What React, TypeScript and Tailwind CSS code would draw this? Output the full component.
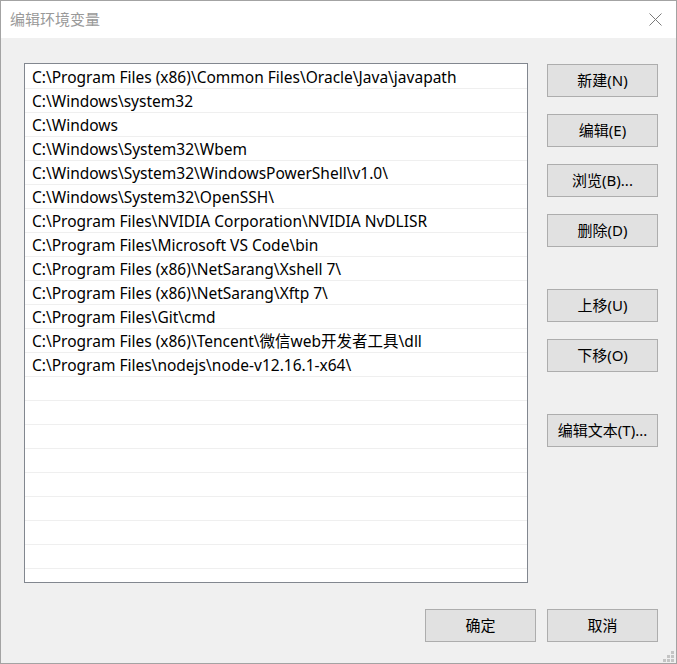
import React from "react";

const PATHS = [
  "C:\\Program Files (x86)\\Common Files\\Oracle\\Java\\javapath",
  "C:\\Windows\\system32",
  "C:\\Windows",
  "C:\\Windows\\System32\\Wbem",
  "C:\\Windows\\System32\\WindowsPowerShell\\v1.0\\",
  "C:\\Windows\\System32\\OpenSSH\\",
  "C:\\Program Files\\NVIDIA Corporation\\NVIDIA NvDLISR",
  "C:\\Program Files\\Microsoft VS Code\\bin",
  "C:\\Program Files (x86)\\NetSarang\\Xshell 7\\",
  "C:\\Program Files (x86)\\NetSarang\\Xftp 7\\",
  "C:\\Program Files\\Git\\cmd",
  "C:\\Program Files (x86)\\Tencent\\微信web开发者工具\\dll",
  "C:\\Program Files\\nodejs\\node-v12.16.1-x64\\",
];

const ROWS = [...PATHS, ...Array(9).fill("")];

function Btn({ label, className = "" }: { label: string; className?: string }) {
  return (
    <button
      className={`flex h-[33px] w-[111px] items-center justify-center border border-[#adadad] bg-[#e1e1e1] text-[15px] text-black ${className}`}
    >
      {label}
    </button>
  );
}

function Grip() {
  const dots = [
    [8, 0],
    [4, 4],
    [8, 4],
    [0, 8],
    [4, 8],
    [8, 8],
  ];
  return (
    <svg width="11" height="11" className="absolute bottom-[1px] right-[2px]">
      {dots.map(([x, y]) => (
        <rect key={`${x}-${y}`} x={x} y={y} width="3" height="3" fill="#c4c4c4" />
      ))}
    </svg>
  );
}

export default function App() {
  return (
    <div
      className="relative flex h-[664px] w-[677px] flex-col border border-[#a3a3a3] bg-[#f0f0f0]"
      style={{ fontFamily: '"Noto Sans", "Noto Sans CJK SC", sans-serif' }}
    >
      <div className="flex h-[37px] items-center justify-between bg-white pl-[9px] pr-[14px]">
        <span className="text-[15px] text-[#999999]">编辑环境变量</span>
        <svg width="13" height="13" viewBox="0 0 13 13">
          <path d="M0.5 0.5 L12.5 12.5 M12.5 0.5 L0.5 12.5" stroke="#7a7a7a" strokeWidth="1" />
        </svg>
      </div>

      <div className="flex flex-1 flex-col pl-[23px] pr-[18px] pt-[25px]">
        <div className="flex gap-[19px]">
          <div className="h-[520px] w-[504px] overflow-hidden border border-[#82878f] bg-white pt-[1px]">
            {ROWS.map((p, i) => (
              <div
                key={i}
                className="flex h-[24px] items-center border-b border-[#efefef] pl-[7px] pt-[2px] text-[15.5px] text-black whitespace-nowrap"
              >
                {p}
              </div>
            ))}
          </div>

          <div className="flex flex-col pt-[1px]">
            <div className="flex flex-col gap-[17px]">
              <Btn label="新建(N)" />
              <Btn label="编辑(E)" />
              <Btn label="浏览(B)..." />
              <Btn label="删除(D)" />
            </div>
            <div className="mt-[42px] flex flex-col gap-[17px]">
              <Btn label="上移(U)" />
              <Btn label="下移(O)" />
            </div>
            <Btn label="编辑文本(T)..." className="mt-[42px]" />
          </div>
        </div>

        <div className="mt-[26px] flex justify-end gap-[11px]">
          <Btn label="确定" />
          <Btn label="取消" />
        </div>
      </div>
      <Grip />
    </div>
  );
}
